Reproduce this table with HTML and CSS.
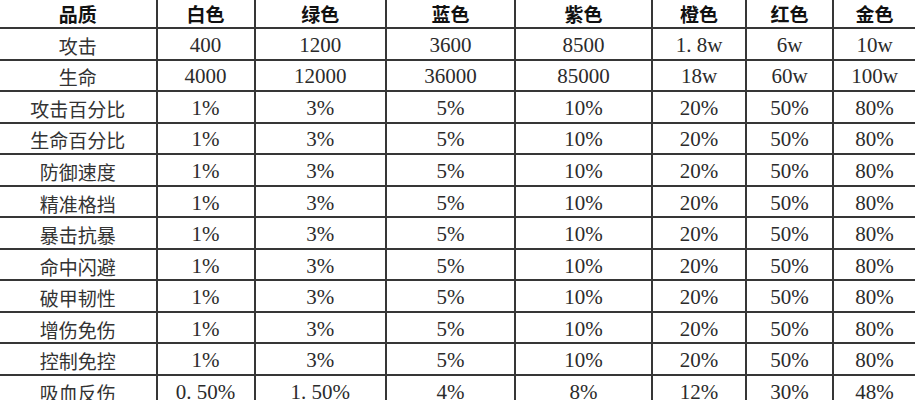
FILE: index.html
```html
<!DOCTYPE html>
<html lang="zh">
<head>
<meta charset="utf-8">
<title>品质属性表</title>
<link rel="stylesheet" href="styles.css">
</head>
<body>
<div class="sheet">
  <div class="c h">品质</div><div class="c h">白色</div><div class="c h">绿色</div><div class="c h">蓝色</div><div class="c h">紫色</div><div class="c h">橙色</div><div class="c h">红色</div><div class="c h">金色</div>

  <div class="c l">攻击</div><div class="c">400</div><div class="c">1200</div><div class="c">3600</div><div class="c">8500</div><div class="c">1. 8w</div><div class="c">6w</div><div class="c">10w</div>
  <div class="c l">生命</div><div class="c">4000</div><div class="c">12000</div><div class="c">36000</div><div class="c">85000</div><div class="c">18w</div><div class="c">60w</div><div class="c">100w</div>
  <div class="c l">攻击百分比</div><div class="c">1%</div><div class="c">3%</div><div class="c">5%</div><div class="c">10%</div><div class="c">20%</div><div class="c">50%</div><div class="c">80%</div>
  <div class="c l">生命百分比</div><div class="c">1%</div><div class="c">3%</div><div class="c">5%</div><div class="c">10%</div><div class="c">20%</div><div class="c">50%</div><div class="c">80%</div>
  <div class="c l">防御速度</div><div class="c">1%</div><div class="c">3%</div><div class="c">5%</div><div class="c">10%</div><div class="c">20%</div><div class="c">50%</div><div class="c">80%</div>
  <div class="c l">精准格挡</div><div class="c">1%</div><div class="c">3%</div><div class="c">5%</div><div class="c">10%</div><div class="c">20%</div><div class="c">50%</div><div class="c">80%</div>
  <div class="c l">暴击抗暴</div><div class="c">1%</div><div class="c">3%</div><div class="c">5%</div><div class="c">10%</div><div class="c">20%</div><div class="c">50%</div><div class="c">80%</div>
  <div class="c l">命中闪避</div><div class="c">1%</div><div class="c">3%</div><div class="c">5%</div><div class="c">10%</div><div class="c">20%</div><div class="c">50%</div><div class="c">80%</div>
  <div class="c l">破甲韧性</div><div class="c">1%</div><div class="c">3%</div><div class="c">5%</div><div class="c">10%</div><div class="c">20%</div><div class="c">50%</div><div class="c">80%</div>
  <div class="c l">增伤免伤</div><div class="c">1%</div><div class="c">3%</div><div class="c">5%</div><div class="c">10%</div><div class="c">20%</div><div class="c">50%</div><div class="c">80%</div>
  <div class="c l">控制免控</div><div class="c">1%</div><div class="c">3%</div><div class="c">5%</div><div class="c">10%</div><div class="c">20%</div><div class="c">50%</div><div class="c">80%</div>
  <div class="c l">吸血反伤</div><div class="c">0. 50%</div><div class="c">1. 50%</div><div class="c">4%</div><div class="c">8%</div><div class="c">12%</div><div class="c">30%</div><div class="c">48%</div>
</div>
</body>
</html>
```

FILE: styles.css
```css
html, body {
  margin: 0;
  padding: 0;
  background: #ffffff;
  overflow: hidden;
}

body {
  width: 915px;
  height: 400px;
}

.sheet {
  display: grid;
  grid-template-columns: 155.5px 96px 129.5px 127px 135px 92px 85px 81px;
  grid-template-rows: 27px repeat(12, 29.55px);
  gap: 2px;
  background: #363636;
  width: 915px;
}

.c {
  background: #ffffff;
  display: flex;
  align-items: center;
  justify-content: center;
  font-family: "Liberation Serif", "Noto Sans CJK SC", serif;
  font-size: 21px;
  color: #2b2b2b;
  white-space: pre;
  line-height: 1;
  padding-top: 3px;
}

.l {
  font-family: "Noto Sans CJK SC", sans-serif;
  font-size: 19px;
  color: #333333;
}

.h {
  font-family: "Noto Sans CJK SC", sans-serif;
  font-size: 19px;
  font-weight: 700;
  color: #111111;
  padding-top: 0;
}
```
